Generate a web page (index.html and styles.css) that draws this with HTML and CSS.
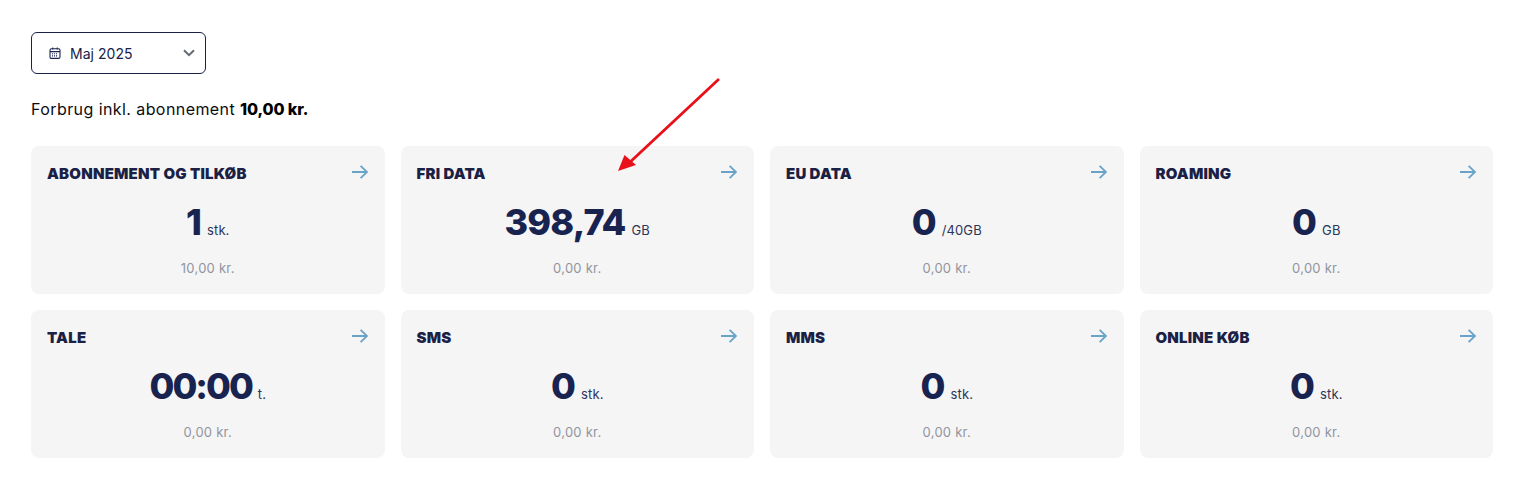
FILE: index.html
```html
<!DOCTYPE html>
<html lang="da">
<head>
<meta charset="utf-8">
<title>Forbrug</title>
<link rel="stylesheet" href="styles.css">
</head>
<body>
<main class="page">
  <div class="select">
    <svg class="cal" viewBox="0 0 12 12" width="12" height="12" fill="none" stroke="#1a2550" stroke-width="1.1"><rect x="1" y="1.8" width="10" height="9.6" rx="1.4"/><path d="M1 4.6h10M3.800 .4v2.200M8.200 .4v2.200"/><path d="M3 6.700h6M3 8.900h6" stroke-dasharray="1 1"/></svg>
    <span class="select-label">Maj 2025</span>
    <svg class="chev" viewBox="0 0 12 8" width="12" height="8" fill="none" stroke="#666a73" stroke-width="2"><path d="M1 1.200l5 5 5-5"/></svg>
  </div>
  <p class="total">Forbrug inkl. abonnement <strong>10,00 kr.</strong></p>
  <section class="grid">
    <article class="card">
      <header class="head"><h2>ABONNEMENT OG TILKØB</h2><svg class="go" viewBox="0 0 16 14" width="16" height="14" fill="none" stroke="#6aa3c8" stroke-width="1.8"><path d="M0 7h15M8.600 .8L15 7l-6.400 6.200"/></svg></header>
      <div class="value"><b>1</b><span>stk.</span></div>
      <div class="price">10,00 kr.</div>
    </article>
    <article class="card">
      <header class="head"><h2>FRI DATA</h2><svg class="go" viewBox="0 0 16 14" width="16" height="14" fill="none" stroke="#6aa3c8" stroke-width="1.8"><path d="M0 7h15M8.600 .8L15 7l-6.400 6.200"/></svg></header>
      <div class="value"><b>398,74</b><span>GB</span></div>
      <div class="price">0,00 kr.</div>
    </article>
    <article class="card">
      <header class="head"><h2>EU DATA</h2><svg class="go" viewBox="0 0 16 14" width="16" height="14" fill="none" stroke="#6aa3c8" stroke-width="1.8"><path d="M0 7h15M8.600 .8L15 7l-6.400 6.200"/></svg></header>
      <div class="value"><b>0</b><span>/40GB</span></div>
      <div class="price">0,00 kr.</div>
    </article>
    <article class="card">
      <header class="head"><h2>ROAMING</h2><svg class="go" viewBox="0 0 16 14" width="16" height="14" fill="none" stroke="#6aa3c8" stroke-width="1.8"><path d="M0 7h15M8.600 .8L15 7l-6.400 6.200"/></svg></header>
      <div class="value"><b>0</b><span>GB</span></div>
      <div class="price">0,00 kr.</div>
    </article>
    <article class="card">
      <header class="head"><h2>TALE</h2><svg class="go" viewBox="0 0 16 14" width="16" height="14" fill="none" stroke="#6aa3c8" stroke-width="1.8"><path d="M0 7h15M8.600 .8L15 7l-6.400 6.200"/></svg></header>
      <div class="value"><b class="time">00:00</b><span>t.</span></div>
      <div class="price">0,00 kr.</div>
    </article>
    <article class="card">
      <header class="head"><h2>SMS</h2><svg class="go" viewBox="0 0 16 14" width="16" height="14" fill="none" stroke="#6aa3c8" stroke-width="1.8"><path d="M0 7h15M8.600 .8L15 7l-6.400 6.200"/></svg></header>
      <div class="value"><b>0</b><span>stk.</span></div>
      <div class="price">0,00 kr.</div>
    </article>
    <article class="card">
      <header class="head"><h2>MMS</h2><svg class="go" viewBox="0 0 16 14" width="16" height="14" fill="none" stroke="#6aa3c8" stroke-width="1.8"><path d="M0 7h15M8.600 .8L15 7l-6.400 6.200"/></svg></header>
      <div class="value"><b>0</b><span>stk.</span></div>
      <div class="price">0,00 kr.</div>
    </article>
    <article class="card">
      <header class="head"><h2>ONLINE KØB</h2><svg class="go" viewBox="0 0 16 14" width="16" height="14" fill="none" stroke="#6aa3c8" stroke-width="1.8"><path d="M0 7h15M8.600 .8L15 7l-6.400 6.200"/></svg></header>
      <div class="value"><b>0</b><span>stk.</span></div>
      <div class="price">0,00 kr.</div>
    </article>
  </section>
</main>
<svg class="annot" viewBox="0 0 104 96" width="104" height="96" fill="#e8101a" stroke="none"><path d="M101 2L10 87" stroke="#e8101a" stroke-width="2.8" fill="none"/><path d="M0 94L6.500 78 18 88z"/></svg>
</body>
</html>
```
FILE: styles.css
```css
* { box-sizing: border-box; }
html, body { margin: 0; padding: 0; background: #fff; }
body { font-family: Inter, "Noto Sans", "Liberation Sans", sans-serif; color: #18244f; height: 495px; overflow: hidden; position: relative; }
.page { padding: 32px 25px 0 31px; }
.select { width: 175px; height: 42px; border: 1px solid #1a2147; border-radius: 6px; display: flex; align-items: center; padding: 0 10px 0 17px; background: #fff; }
.cal { flex: none; }
.select-label { font-size: 14px; margin-left: 9px; flex: 1; color: #18224a; letter-spacing: .05px; }
.chev { flex: none; }
.total { margin: 24px 0 0; font-size: 16px; line-height: 22px; color: #0c0c10; letter-spacing: .42px; }
.total strong { font-weight: 800; color: #000; letter-spacing: -.1px; }
.grid { display: grid; grid-template-columns: repeat(4, 1fr); gap: 16px; margin-top: 26px; }
.card { background: #f5f5f6; border-radius: 8px; height: 148px; padding: 16px; display: flex; flex-direction: column; }
.head { display: flex; justify-content: space-between; align-items: center; height: 22px; }
.head h2 { margin: 1px 0 0; font-size: 15px; line-height: 22px; font-weight: 900; color: #1a2144; letter-spacing: .2px; }
.go { flex: none; margin-top: -2px; margin-right: 1px; }
.value { display: flex; justify-content: center; align-items: baseline; margin-top: 13px; height: 50px; line-height: 50px; }
.value b { font-size: 36px; font-weight: 800; color: #18244f; letter-spacing: -.85px; }
.value .time { letter-spacing: -2px; }
.value span { font-size: 13px; margin-left: 6px; color: #2c3658; letter-spacing: .1px; }
.price { text-align: center; font-size: 13px; line-height: 20px; color: #92949e; margin-top: 11px; letter-spacing: .25px; }
.annot { position: absolute; left: 618px; top: 77px; }
```
